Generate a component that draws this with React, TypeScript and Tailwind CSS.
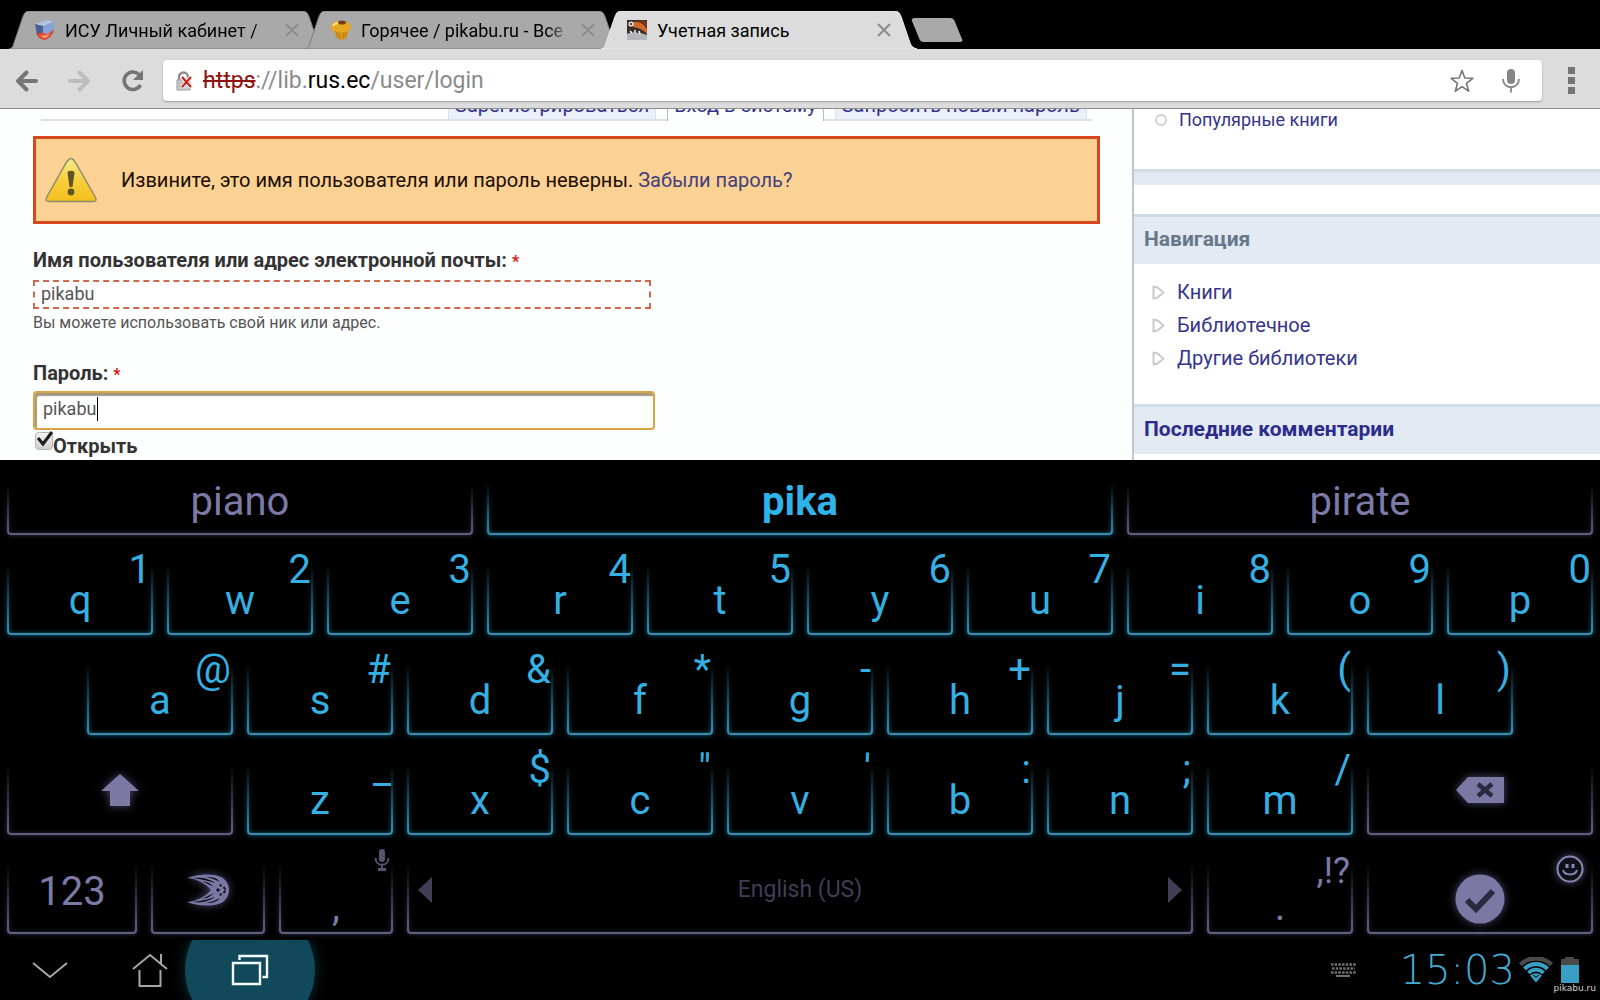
import { useState, type ReactNode } from "react"
import clsx from "clsx"

type Tone = "blue" | "violet"

const TABS = [
  { title: "ИСУ Личный кабинет /", icon: <CubeIcon />, active: false },
  { title: "Горячее / pikabu.ru - Все", icon: <MuffinIcon />, active: false },
  { title: "Учетная запись", icon: <PhotoIcon />, active: true },
]

const SUGGESTIONS: { word: string; tone: Tone }[] = [
  { word: "piano", tone: "violet" },
  { word: "pika", tone: "blue" },
  { word: "pirate", tone: "violet" },
]

const ROW_ONE = ["q1", "w2", "e3", "r4", "t5", "y6", "u7", "i8", "o9", "p0"]
const ROW_TWO = ["a@", "s#", "d&", "f*", "g-", "h+", "j=", "k(", "l)"]
const ROW_THREE = ["z_", "x$", 'c"', "v'", "b:", "n;", "m/"]

const NAV_LINKS = ["Книги", "Библиотечное", "Другие библиотеки"]

/* ---------- Browser icons ---------- */

function CubeIcon() {
  return (
    <svg width="20" height="20" viewBox="0 0 20 20" className="shrink-0">
      <path d="M0 4 13 0l6 2-11 4z" fill="#b4c3df" />
      <path d="M0 4 8 6v12l-6-3z" fill="#4a5f93" />
      <path d="M8 6 19 2v11L9 19z" fill="#86a3d6" />
      <path d="M1 13c3 1 5 0 7-1l2 2c3 0 6-2 9-5-1 6-4 9-9 11-4 0-8-3-9-7z" fill="#dc4a35" />
      <path d="M5 15c3 1 7 1 10-2-1 3-4 5-6 5z" fill="#f9a27c" />
    </svg>
  )
}

function MuffinIcon() {
  return (
    <svg width="20" height="20" viewBox="0 0 20 20" className="shrink-0">
      <path d="M2 9h16l-2 8c-2 4-8 3-10 1z" fill="#d99a1c" />
      <path d="M5 11l2 7M8 12l1 7M12 12v7M15 11l-1 7" stroke="#b87a14" />
      <path d="M0 7c0-4 4-6 10-6s10 2 10 7c0 3-4 3-6 4-3 1-5 1-8 0-3-1-6-1-6-5z" fill="#e5a722" />
      <path d="M2 6c1-2 3-3 6-3" stroke="#ffe38a" strokeWidth="2" fill="none" />
      <ellipse cx="11" cy="2.500" rx="4" ry="2" fill="#7c3d12" />
    </svg>
  )
}

function PhotoIcon() {
  return (
    <svg width="20" height="20" viewBox="0 0 20 20" className="shrink-0">
      <path d="M0 0h20v20H0z" fill="#3b2d2a" />
      <path d="M6 2c6-1 10 1 14 7v5c-5-6-10-6-14-7z" fill="#d2692c" />
      <path d="M9 2c4 0 8 2 11 5V2l-4-2z" fill="#7c3517" />
      <path d="M0 14c6-3 14-1 20 1v5H0z" fill="#b4b6bd" />
      <path d="M3 11l2 2M8 10v3M12 11l1 3" stroke="#f1f1f1" strokeWidth="1.600" />
      <circle cx="4" cy="4" r="2.600" fill="#e8e4e0" />
      <circle cx="4" cy="4" r="1.100" fill="#222" />
    </svg>
  )
}

function CloseIcon() {
  return (
    <svg width="14" height="14" viewBox="0 0 14 14" stroke="#8f8f8f" strokeWidth="2.200">
      <path d="M1 1l12 12M13 1 1 13" />
    </svg>
  )
}

function ArrowIcon({ flipped, color }: { flipped?: boolean; color: string }) {
  return (
    <svg
      width="24"
      height="24"
      viewBox="0 0 24 24"
      className={clsx(flipped && "rotate-180")}
      fill="none"
      stroke={color}
      strokeWidth="4"
      strokeLinecap="round"
      strokeLinejoin="round"
    >
      <path d="M11.500 3.500 3 12l8.500 8.500M3.500 12H21" />
    </svg>
  )
}

function ReloadIcon() {
  return (
    <svg width="24" height="24" viewBox="0 0 24 24">
      <path d="M18 5.500A8.700 8.700 0 1 0 19.500 16" fill="none" stroke="#757575" strokeWidth="3.600" />
      <path d="M22 1v10H12z" fill="#757575" />
    </svg>
  )
}

function BrokenLockIcon() {
  return (
    <svg width="18" height="20" viewBox="0 0 18 20" fill="none">
      <path d="M4 9V6a4.500 4.500 0 0 1 9 0v3" stroke="#8d8d8d" strokeWidth="2.400" />
      <path d="M2 9h13v10H2z" fill="#cfcfcf" stroke="#9a9a9a" />
      <path d="M3 12h5M3 15h5" stroke="#a9a9a9" />
      <path d="m7 6 9 10M16 6 7 16" stroke="#fff" strokeWidth="4" />
      <path d="m7 6 9 10M16 6 7 16" stroke="#c8201d" strokeWidth="2.200" />
    </svg>
  )
}

function StarIcon() {
  return (
    <svg width="24" height="24" viewBox="0 0 24 24" fill="none" stroke="#757575" strokeWidth="1.600" strokeLinejoin="round">
      <path d="m12 1.500 2.800 7.500 8 .3-6.300 5 2.200 7.900L12 17.700l-6.700 4.500 2.200-7.900-6.300-5 8-.3z" />
    </svg>
  )
}

function MicIcon({ color }: { color: string }) {
  return (
    <svg width="18" height="24" viewBox="0 0 18 24" fill="none">
      <rect x="5" y="0" width="8" height="15" rx="4" fill={color} />
      <path d="M1 10c0 11 16 11 16 0M9 18.500V23.500" stroke={color} strokeWidth="1.800" />
    </svg>
  )
}

function WarningIcon() {
  return (
    <svg width="54" height="46" viewBox="0 0 54 46">
      <defs>
        <linearGradient id="warn" x1="0" y1="0" x2="0" y2="1">
          <stop offset="0" stopColor="#f8ec8e" />
          <stop offset=".5" stopColor="#f6cf3e" />
          <stop offset="1" stopColor="#f5bf1c" />
        </linearGradient>
      </defs>
      <path
        d="M27 1.500c2 0 3 2 5 5l19 33c2 4 1 5-2 5H5c-3 0-4-1-2-5L22 6c2-3 3-4.500 5-4.500z"
        fill="url(#warn)"
        stroke="#8f8c6e"
        strokeWidth="1.500"
      />
      <path d="M23.500 16c0-3 7-3 7 0L28.500 30h-3z" fill="#5f5426" />
      <circle cx="27" cy="35" r="3.400" fill="#5f5426" />
    </svg>
  )
}

/* ---------- Browser chrome ---------- */

function TabShape({ active }: { active: boolean }) {
  return (
    <svg viewBox="0 0 320 38" preserveAspectRatio="none" className="absolute inset-0 h-full w-full">
      <path
        d="M0 38c4-1 4-3 5-6L14 6c2-5 3-6 8-6h274c5 0 6 1 8 6l9 26c1 3 3 5 7 6z"
        fill={active ? "#dcdcdc" : "#a9a9a9"}
        stroke={active ? "#ececec" : "#7d7d7d"}
      />
    </svg>
  )
}

function Tab({ title, icon, active }: { title: string; icon: ReactNode; active: boolean }) {
  return (
    <div className={clsx("relative -ml-5 h-[38px] w-[316px]", active && "z-10")}>
      <TabShape active={active} />
      <div className="relative flex h-full items-center pr-[26px] pl-[26px]">
        {icon}
        <button
          type="button"
          className={clsx(
            "ml-2.5 min-w-0 flex-1 overflow-hidden pt-0.5 text-left text-[18px] leading-6 whitespace-nowrap text-black",
            !active && "[mask-image:linear-gradient(to_right,black_90%,transparent)]"
          )}
        >
          {title}
        </button>
        <button type="button" aria-label={`Закрыть ${title}`} className="ml-3">
          <CloseIcon />
        </button>
      </div>
    </div>
  )
}

function TabStrip() {
  return (
    <div className="flex h-[49px] shrink-0 items-end bg-black pl-[29px]">
      {TABS.map((tab) => (
        <Tab key={tab.title} {...tab} />
      ))}
      <button type="button" aria-label="Новая вкладка" className="-ml-1.5 self-end pb-1.5">
        <svg width="52" height="26" viewBox="0 0 52 26">
          <path d="M4 1h34c4 0 5 1 6 4l7 17c1 2 0 3-2 3H14c-4 0-5-1-6-4L1 4c-1-2 1-3 3-3z" fill="#a9a9a9" />
        </svg>
      </button>
    </div>
  )
}

function Toolbar() {
  return (
    <div className="flex h-[60px] shrink-0 items-center border-b border-[#8f8f8f] bg-[#dcdcdc] pt-1 pr-[25px] pl-[15px]">
      <button type="button" aria-label="Назад">
        <ArrowIcon color="#757575" />
      </button>
      <button type="button" aria-label="Вперёд" className="ml-7">
        <ArrowIcon flipped color="#bdbdbd" />
      </button>
      <button type="button" aria-label="Обновить" className="ml-[30px]">
        <ReloadIcon />
      </button>
      <div className="relative ml-[18px] flex h-[41px] flex-1 items-center rounded-sm bg-white pr-[22px] pl-3 shadow-[0_1px_2px_rgba(0,0,0,0.3)]">
        <BrokenLockIcon />
        <div className="ml-[10px] flex-1 text-[23px] leading-8 text-[#8a8a8a]">
          <span className="text-[#8f1410] line-through">https</span>
          ://lib.<span className="text-black">rus.ec</span>/user/login
        </div>
        <input type="text" aria-label="Адрес" className="absolute inset-y-0 left-10 w-1/2 opacity-0" />
        <button type="button" aria-label="Добавить в закладки">
          <StarIcon />
        </button>
        <button type="button" aria-label="Голосовой поиск" className="ml-7">
          <MicIcon color="#858585" />
        </button>
      </div>
      <button type="button" aria-label="Меню" className="ml-[26px] flex flex-col gap-[3px]">
        <span className="size-[7px] bg-[#757575]" />
        <span className="size-[7px] bg-[#757575]" />
        <span className="size-[7px] bg-[#757575]" />
      </button>
    </div>
  )
}

/* ---------- Web page ---------- */

function PageTabs() {
  return (
    <nav className="-mt-[18px] mr-2 ml-2 flex items-stretch text-[20px] leading-7">
      <span className="w-[407px] border-b-2 border-[#dfe1e8]" />
      <a href="#register" className="border-x border-b-2 border-[#dfe1e8] bg-[#eaeff8] px-[6px] text-[#34348c]">
        Зарегистрироваться
      </a>
      <span className="w-[11px] border-b-2 border-[#dfe1e8]" />
      <a href="#login" className="border-x border-[#b9bdc6] px-[6px] text-[#34348c]">
        Вход в систему
      </a>
      <span className="w-[11px] border-b-2 border-[#dfe1e8]" />
      <a href="#password" className="border-x border-b-2 border-[#dfe1e8] bg-[#eaeff8] px-[6px] text-[#34348c]">
        Запросить новый пароль
      </a>
      <span className="flex-1 border-b-2 border-[#dfe1e8]" />
    </nav>
  )
}

function LoginForm() {
  const [name, setName] = useState("pikabu")
  const [password, setPassword] = useState("pikabu")
  const [visible, setVisible] = useState(true)

  return (
    <form className="flex flex-col items-start text-[#333]">
      <label htmlFor="name" className="mt-6 text-[20px] leading-6 font-bold">
        Имя пользователя или адрес электронной почты: <span className="text-[16px] text-[#e01010]">*</span>
      </label>
      <input
        id="name"
        type="text"
        value={name}
        onChange={(e) => setName(e.target.value)}
        className="mt-1.5 h-[29px] w-[618px] border-2 border-dashed border-[#d0694c] bg-white px-1.5 pb-0.5 text-[18px] leading-6 text-[#555]"
      />
      <p className="mt-0.5 text-[16px] leading-6 text-[#555]">Вы можете использовать свой ник или адрес.</p>
      <label htmlFor="password" className="mt-[26px] text-[20px] leading-6 font-bold">
        Пароль: <span className="text-[16px] text-[#e01010]">*</span>
      </label>
      <div className="relative mt-1">
        <input
          id="password"
          type={visible ? "text" : "password"}
          value={password}
          onChange={(e) => setPassword(e.target.value)}
          className="block h-[39px] w-[622px] rounded-sm border-2 border-[#d9a441] bg-white px-2 pb-1 text-[18px] leading-6 text-[#555] shadow-[inset_2px_3px_1px_#a39a86]"
        />
        <span className="absolute top-1.5 left-16 h-6 w-px bg-black" />
      </div>
      <label className="flex items-start text-[20px] leading-6 font-bold">
        <span className="relative pt-0.5">
          <input
            type="checkbox"
            checked={visible}
            onChange={(e) => setVisible(e.target.checked)}
            className="peer ml-0.5 block size-[18px] appearance-none rounded-sm border border-[#b5b5b5] bg-linear-to-b from-[#f4f4f4] to-[#cfcfcf]"
          />
          <svg
            viewBox="0 0 20 20"
            className="pointer-events-none absolute top-0 left-0.5 hidden size-5 peer-checked:block"
            fill="none"
            stroke="#1c1c1c"
            strokeWidth="3"
          >
            <path d="m3 8 5 6 9-12" />
          </svg>
        </span>
        <span className="pt-1">Открыть</span>
      </label>
    </form>
  )
}

function Sidebar() {
  return (
    <aside className="w-[468px] shrink-0 border-l-2 border-[#c3c5cc] bg-white text-[20px] leading-[33px]">
      <a href="#popular" className="-mt-1.5 flex items-center pl-[21px] text-[18px] text-[#34348c]">
        <span className="mr-3 size-3 rounded-full border-2 border-[#cfcfcf]" />
        Популярные книги
      </a>
      <div className="mt-[33px] h-4 border-t-3 border-[#d0dbe8] bg-[#e3eaf3]" />
      <h2 className="mt-[29px] border-t-3 border-[#d0dbe8] bg-[#e3eaf3] px-2.5 pt-1.5 pb-2 text-[21px] font-bold text-[#66788a]">
        Навигация
      </h2>
      <ul className="mt-3">
        {NAV_LINKS.map((label) => (
          <li key={label} className="flex items-center pl-[18px]">
            <svg width="13" height="15" viewBox="0 0 13 15" fill="none" stroke="#cacaca" strokeWidth="2" strokeLinejoin="round">
              <path d="M1.500 1.500v12l4-1 6-5-6-5z" />
            </svg>
            <a href="#nav" className="ml-3 text-[#34348c]">
              {label}
            </a>
          </li>
        ))}
      </ul>
      <h2 className="mt-[29px] border-t-3 border-[#d0dbe8] bg-[#e3eaf3] px-2.5 pt-1.5 pb-2 text-[21px] font-bold">
        <a href="#comments" className="text-[#2c2c8c]">
          Последние комментарии
        </a>
      </h2>
    </aside>
  )
}

function Page() {
  return (
    <div className="flex min-h-0 flex-1 overflow-hidden bg-[#fdfefe]">
      <main className="min-w-0 flex-1 pr-8 pl-[33px]">
        <PageTabs />
        <div className="mt-[15px] flex h-[88px] items-center border-3 border-[#d8481f] bg-[#fbd194] pl-2 text-[20px] leading-6 text-[#1c0d00]">
          <WarningIcon />
          <p className="ml-[23px]">
            Извините, это имя пользователя или пароль неверны.{" "}
            <a href="#forgot" className="text-[#43407c]">
              Забыли пароль?
            </a>
          </p>
        </div>
        <LoginForm />
      </main>
      <Sidebar />
    </div>
  )
}

/* ---------- Keyboard ---------- */

function KeyFrame({ tone }: { tone: Tone }) {
  return (
    <span className="absolute inset-0 [mask-image:linear-gradient(to_bottom,transparent_22px,black_90%)]">
      <span
        className={clsx(
          "absolute inset-x-[7px] top-0 bottom-[6px] rounded-b-[4px] border-x-2 border-b-2",
          tone === "blue"
            ? "border-[#3b8bab] shadow-[0_0_5px_#0f6d93,inset_0_0_4px_#0f5c7d]"
            : "border-[#605e7c] shadow-[0_0_5px_#34324f,inset_0_0_4px_#2a2942]"
        )}
      />
    </span>
  )
}

function LetterKey({ pair }: { pair: string }) {
  return (
    <button
      type="button"
      className="relative flex flex-1 items-start justify-center pt-10 text-[40px] leading-10 text-[#35b0e2]"
    >
      <KeyFrame tone="blue" />
      <span>{pair[0]}</span>
      <span className="absolute top-[9px] right-[9px]">{pair[1]}</span>
    </button>
  )
}

function FunctionKey({ label, className, children }: { label: string; className: string; children: ReactNode }) {
  return (
    <button type="button" aria-label={label} className={clsx("relative flex justify-center text-[#7c7aa6]", className)}>
      <KeyFrame tone="violet" />
      {children}
    </button>
  )
}

function SwiftLogo({ className }: { className: string }) {
  return (
    <svg width="44" height="32" viewBox="0 0 44 32" className={className}>
      <path
        d="M1 4C12 0 20 0 28 1c10 1 15 8 15 15s-5 14-15 15c-8 1-16 1-27-3 10-1 18-5 24-12C19 9 11 5 1 4z"
        fill="#7b79a4"
      />
      <g fill="#0b0b12">
        <path d="M7 4c9-1 17 1 22 5-6-2-13-4-22-5zM16 7c6 1 9 3 12 6-4-2-8-4-12-6zM20 3c7 0 11 1 14 5-4-2-8-4-14-5z" />
        <path d="M7 28c9 1 17-1 22-5-6 2-13 4-22 5zM16 25c6-1 9-3 12-6-4 2-8 4-12 6zM20 29c7 0 11-1 14-5-4 2-8 4-14 5z" />
        <path d="m30 16 2-2 2 2-2 2zM33 11l2-1 1 2-1 1zM33 21l2 1 1-2-1-1zM38 12l2 3-1 1-2-2zM38 20l2-3-1-1-2 2z" />
      </g>
    </svg>
  )
}

function Keyboard() {
  const glow = "drop-shadow-[0_0_4px_#4a4870]"

  return (
    <section className="flex shrink-0 flex-col bg-black pt-px">
      <div className="grid h-20 grid-cols-[3fr_4fr_3fr]">
        {SUGGESTIONS.map(({ word, tone }) => (
          <button
            key={word}
            type="button"
            className={clsx(
              "relative pt-0.5 text-[40px] leading-10",
              tone === "blue" ? "font-bold text-[#2fb4ea]" : "text-[#7c7aa6]"
            )}
          >
            <KeyFrame tone={tone} />
            {word}
          </button>
        ))}
      </div>
      <div className="flex h-[100px] items-stretch">
        {ROW_ONE.map((pair) => (
          <LetterKey key={pair} pair={pair} />
        ))}
      </div>
      <div className="flex h-[100px] items-stretch px-[5%]">
        {ROW_TWO.map((pair) => (
          <LetterKey key={pair} pair={pair} />
        ))}
      </div>
      <div className="flex h-[100px] items-stretch">
        <FunctionKey label="Shift" className="w-[15%] pt-8">
          <svg width="40" height="34" viewBox="0 0 40 34" className={glow}>
            <path d="M20 1 39 18H30v15H10V18H1z" fill="#7b79a4" />
          </svg>
        </FunctionKey>
        {ROW_THREE.map((pair) => (
          <LetterKey key={pair} pair={pair} />
        ))}
        <FunctionKey label="Backspace" className="w-[15%] pt-9">
          <svg width="50" height="26" viewBox="0 0 50 26" className={glow}>
            <path d="M13 0h36v26H13L1 13z" fill="#7b79a4" />
            <path d="m23 7 14 12M37 7 23 19" stroke="#2a2940" strokeWidth="4.500" />
          </svg>
        </FunctionKey>
      </div>
      <div className="grid h-[99px] grid-cols-[9fr_8fr_8fr_50fr_10fr_15fr]">
        <FunctionKey label="123" className="pt-[31px] text-[40px] leading-10">
          123
        </FunctionKey>
        <FunctionKey label="SwiftKey" className="pt-[33px]">
          <SwiftLogo className={glow} />
        </FunctionKey>
        <FunctionKey label="Запятая" className="pt-[46px] text-[40px] leading-10">
          ,
          <span className="absolute top-2 right-[10px]">
            <svg width="16" height="22" viewBox="0 0 16 22" fill="none" stroke="#55536f">
              <rect x="5" y="0" width="6" height="13" rx="3" fill="#55536f" stroke="none" />
              <path d="M1.500 9c0 9 13 9 13 0M8 15v5" strokeWidth="2" />
              <path d="M4 20.500h8" strokeWidth="3" />
            </svg>
          </span>
        </FunctionKey>
        <FunctionKey label="Пробел" className="items-center px-[18px] pb-0.5 text-[23px] leading-7">
          <svg width="14" height="26" viewBox="0 0 14 26">
            <path d="M14 0v26L0 13z" fill="#3f3e56" />
          </svg>
          <span className="flex-1 text-[#3f3e56]">English (US)</span>
          <svg width="14" height="26" viewBox="0 0 14 26">
            <path d="M0 0v26l14-13z" fill="#3f3e56" />
          </svg>
        </FunctionKey>
        <FunctionKey label="Точка" className="pt-[46px] text-[40px] leading-10">
          .
          <span className="absolute top-2.5 right-2.5 text-[36px]">,!?</span>
        </FunctionKey>
        <FunctionKey label="Готово" className="pt-[33px]">
          <svg width="50" height="50" viewBox="0 0 50 50" className={glow}>
            <circle cx="25" cy="25" r="24.500" fill="#7b79a4" />
            <path d="m12 26 9 9 17-18" fill="none" stroke="#2a2940" strokeWidth="6" />
          </svg>
          <span className="absolute top-3.5 right-4">
            <svg width="28" height="28" viewBox="0 0 28 28" className={glow} fill="none" stroke="#8a88b4">
              <circle cx="14" cy="14" r="12.500" strokeWidth="2" fill="#111018" />
              <path d="M11 9v4M17 9v4" strokeWidth="3" />
              <path d="M7 15c2 6 12 6 14 0" strokeWidth="2" />
            </svg>
          </span>
        </FunctionKey>
      </div>
    </section>
  )
}

/* ---------- System bar ---------- */

function WifiIcon() {
  return (
    <svg width="34" height="26" viewBox="0 0 34 26" fill="none">
      <path d="M1.500 7.500C10-.5 24-.5 32.500 7.500" stroke="#4a4a4a" strokeWidth="4.500" />
      <path d="M5.500 12c6-6.500 17-6.500 23 0" stroke="#3a9fc4" strokeWidth="4.200" />
      <path d="M9.500 16c4-4.500 11-4.500 15 0" stroke="#3a9fc4" strokeWidth="3.600" />
      <path d="M11 18.500c4-3 8-3 12 0l-6 7z" fill="#3a9fc4" />
      <path d="M14 18l3 2 3-2" stroke="#12303c" strokeWidth="1.500" />
    </svg>
  )
}

function SystemBar() {
  return (
    <footer className="relative flex h-[60px] shrink-0 items-center overflow-hidden bg-black pr-[21px] pl-8">
      <button type="button" aria-label="Скрыть клавиатуру">
        <svg width="36" height="18" viewBox="0 0 36 18" fill="none" stroke="#a6a6a6" strokeWidth="2">
          <path d="M1 2l17 14L35 2" />
        </svg>
      </button>
      <button type="button" aria-label="Домой" className="ml-16">
        <svg width="36" height="36" viewBox="0 0 36 36" fill="none" stroke="#a6a6a6" strokeWidth="2">
          <path d="M1 17 18 3l17 14M29 2v10M7.500 18v16h21V18" />
        </svg>
      </button>
      <button
        type="button"
        aria-label="Недавние приложения"
        className="-my-10 ml-[17px] flex size-[130px] shrink-0 items-center justify-center rounded-full bg-[#12495a] shadow-[0_0_14px_#0a2f3a]"
      >
        <svg width="38" height="32" viewBox="0 0 38 32" fill="none" stroke="#f2fbfd" strokeWidth="2.400">
          <path d="M2 9h27v21H2z" />
          <path d="M8.500 6V2H36v21h-4.500" />
        </svg>
      </button>
      <div className="ml-auto flex items-center text-[#45abd2]">
        <svg width="25" height="14" viewBox="0 0 25 14" stroke="#6f6f6f">
          <path d="M0 1.500h25M1 5.500h23M0 9.500h25" strokeWidth="2.500" strokeDasharray="2.500 1.200" />
          <path d="M5 13h14" strokeWidth="2" />
        </svg>
        <time className="ml-11 font-['DejaVu_Sans'] text-[40px] leading-10 font-extralight">15:03</time>
        <span className="ml-1">
          <WifiIcon />
        </span>
        <svg width="18" height="26" viewBox="0 0 18 26" className="ml-2">
          <path d="M4 0h9v2h5v6H0V2h4z" fill="#4a4a4a" />
          <path d="M0 8h18v18H0z" fill="#3a9fc4" />
        </svg>
      </div>
      <span className="absolute right-1 bottom-1 font-['DejaVu_Sans'] text-[9px] leading-4 text-[#d0d0d0]">pikabu.ru</span>
    </footer>
  )
}

export default function App() {
  return (
    <div className="flex h-screen flex-col overflow-hidden bg-black font-['Roboto',sans-serif]">
      <TabStrip />
      <Toolbar />
      <Page />
      <Keyboard />
      <SystemBar />
    </div>
  )
}
